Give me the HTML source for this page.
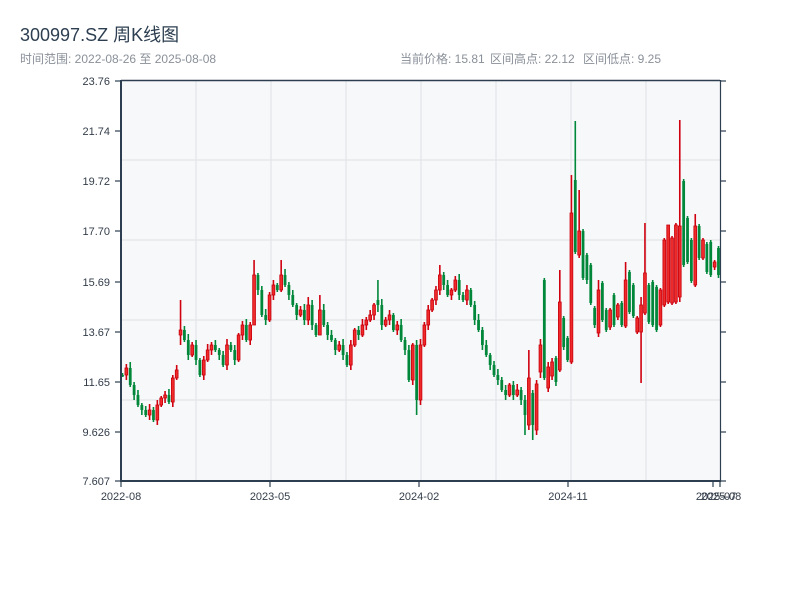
<!DOCTYPE html>
<html><head><meta charset="utf-8"><style>
html,body{margin:0;padding:0;background:#fff;width:800px;height:600px;overflow:hidden}
svg{display:block}
text{font-family:"Liberation Sans","Noto Sans CJK SC",sans-serif}
</style></head><body>
<svg id="s" width="800" height="600" xmlns="http://www.w3.org/2000/svg">
<text x="20" y="41" font-size="18" fill="#2c3e50">300997.SZ 周K线图</text>
<text x="20" y="63" font-size="12" fill="#8a9099">时间范围: 2022-08-26 至 2025-08-08</text>
<text x="400" y="63" font-size="12" fill="#8a9099">当前价格: 15.81</text>
<text x="490" y="63" font-size="12" fill="#8a9099">区间高点: 22.12</text>
<text x="583" y="63" font-size="12" fill="#8a9099">区间低点: 9.25</text>
<rect x="121" y="81" width="599" height="400" fill="#f7f8fa"/>
<g stroke="#e1e4e8" stroke-width="1.2">
<line x1="196" y1="81" x2="196" y2="481"/><line x1="271" y1="81" x2="271" y2="481"/>
<line x1="346" y1="81" x2="346" y2="481"/><line x1="421" y1="81" x2="421" y2="481"/>
<line x1="496" y1="81" x2="496" y2="481"/><line x1="571" y1="81" x2="571" y2="481"/>
<line x1="646" y1="81" x2="646" y2="481"/>
<line x1="121" y1="160" x2="720" y2="160"/><line x1="121" y1="240" x2="720" y2="240"/>
<line x1="121" y1="320" x2="720" y2="320"/><line x1="121" y1="400" x2="720" y2="400"/>
</g>
<g id="c"></g>
<g stroke="#2c3e50">
<line x1="121" y1="80.5" x2="720" y2="80.5" stroke-width="1.5"/>
<line x1="121" y1="80" x2="121" y2="482" stroke-width="2"/>
<line x1="120" y1="481" x2="721" y2="481" stroke-width="2"/>
<line x1="720.5" y1="80" x2="720.5" y2="482" stroke-width="1.2"/>
</g>
<g id="t" stroke="#2c3e50" stroke-width="1.2"></g>
<g font-size="11" fill="#333d4a" text-anchor="end">
<text x="110" y="85">23.76</text><text x="110" y="135">21.74</text><text x="110" y="185">19.72</text>
<text x="110" y="235">17.70</text><text x="110" y="286">15.69</text><text x="110" y="336">13.67</text>
<text x="110" y="386">11.65</text><text x="110" y="436">9.626</text><text x="110" y="485">7.607</text>
</g>
<g font-size="11" fill="#333d4a" text-anchor="middle">
<text x="121" y="500">2022-08</text><text x="270" y="500">2023-05</text><text x="419" y="500">2024-02</text>
<text x="568" y="500">2024-11</text><text x="716" y="500">2025-07</text><text x="721" y="500">2025-08</text>
</g>
</svg>
<script>
(function(){
var NS="http://www.w3.org/2000/svg";
var t=document.getElementById('t');
function ln(g,x1,y1,x2,y2){var l=document.createElementNS(NS,'line');l.setAttribute('x1',x1);l.setAttribute('y1',y1);l.setAttribute('x2',x2);l.setAttribute('y2',y2);g.appendChild(l);}
[81,131,181,231,282,332,382,432,481].forEach(function(y){ln(t,115,y,121,y);ln(t,720,y,726,y);});
[121,270,419,568,713,720].forEach(function(x){ln(t,x,481,x,487);});
var d=[375,368,385,395,405,410,415,410,420,405,398,395,402,378,370,[335,330,300,345],340,355,345,360,375,360,350,345,350,355,365,345,350,360,335,325,340,325,[325,275,260,300],290,315,320,295,285,290,[290,275,260,292],285,295,305,315,310,320,[320,305,297,325],325,335,[335,310,295,330],325,335,340,350,345,355,365,345,330,335,325,320,315,305,[300,305,280,312],325,320,315,330,325,340,350,380,345,[345,400,340,415],345,325,310,300,290,[290,275,265,295],285,295,290,280,295,300,290,305,320,330,345,355,365,375,380,390,395,385,395,390,400,[400,415,395,435],[425,378,350,430],[393,425,390,440],[430,384,380,435],[372,345,339,378],[280,378,278,380],[388,367,362,392],[376,362,358,380],[358,382,356,386],[370,302,270,372],[318,347,316,350],[338,360,336,362],[362,213,175,364],[180,252,121,254],[255,231,190,258],[231,278,229,280],[255,280,253,284],[265,303,263,305],[308,325,306,328],[333,290,280,337],[283,320,281,322],[310,330,308,332],[327,310,308,330],[295,325,293,327],[317,305,303,320],[303,325,301,327],[326,280,262,328],[272,312,270,314],[285,316,283,318],[332,318,316,334],[332,305,297,383],[313,273,223,315],[285,322,283,324],[282,325,280,327],[287,330,285,332],[325,290,288,327],[305,240,238,307],[302,225,238,304],[303,238,236,305],[302,225,223,304],[297,226,120,302],[181,265,179,267],[218,262,216,264],[240,281,238,283],[285,226,214,287],[226,258,224,260],[258,240,238,260],[244,272,242,274],[242,275,240,277],[267,262,260,270],[248,275,246,278]];
var g=document.getElementById('c'),prev=375;
for(var i=0;i<d.length;i++){
 var e=d[i],o,c,h,l;
 if(typeof e==='number'){o=prev;c=e;h=Math.min(o,c)-2-(i*7%5);l=Math.max(o,c)+2+(i*3%6);}
 else{o=e[0];c=e[1];h=e[2];l=e[3];if(h>Math.min(o,c))h=Math.min(o,c);if(l<Math.max(o,c))l=Math.max(o,c);}
 prev=c;
 var x=122.5+i*3.87,up=c<o;
 var col=up?'#d0000f':'#00873a';
 var w=document.createElementNS(NS,'line');
 w.setAttribute('x1',x);w.setAttribute('x2',x);w.setAttribute('y1',h);w.setAttribute('y2',l);
 w.setAttribute('stroke',col);w.setAttribute('stroke-width','1.6');g.appendChild(w);
 var r=document.createElementNS(NS,'rect');
 var by=Math.min(o,c),ht=Math.max(Math.abs(o-c),1.5);
 r.setAttribute('x',x-1.4);r.setAttribute('y',by);r.setAttribute('width',2.8);r.setAttribute('height',ht);
 r.setAttribute('fill',up?'#ee2a2a':'#00873a');
 if(up){r.setAttribute('stroke','#c8000c');r.setAttribute('stroke-width','0.8');}
 g.appendChild(r);
}
})();
</script>
</body></html>
